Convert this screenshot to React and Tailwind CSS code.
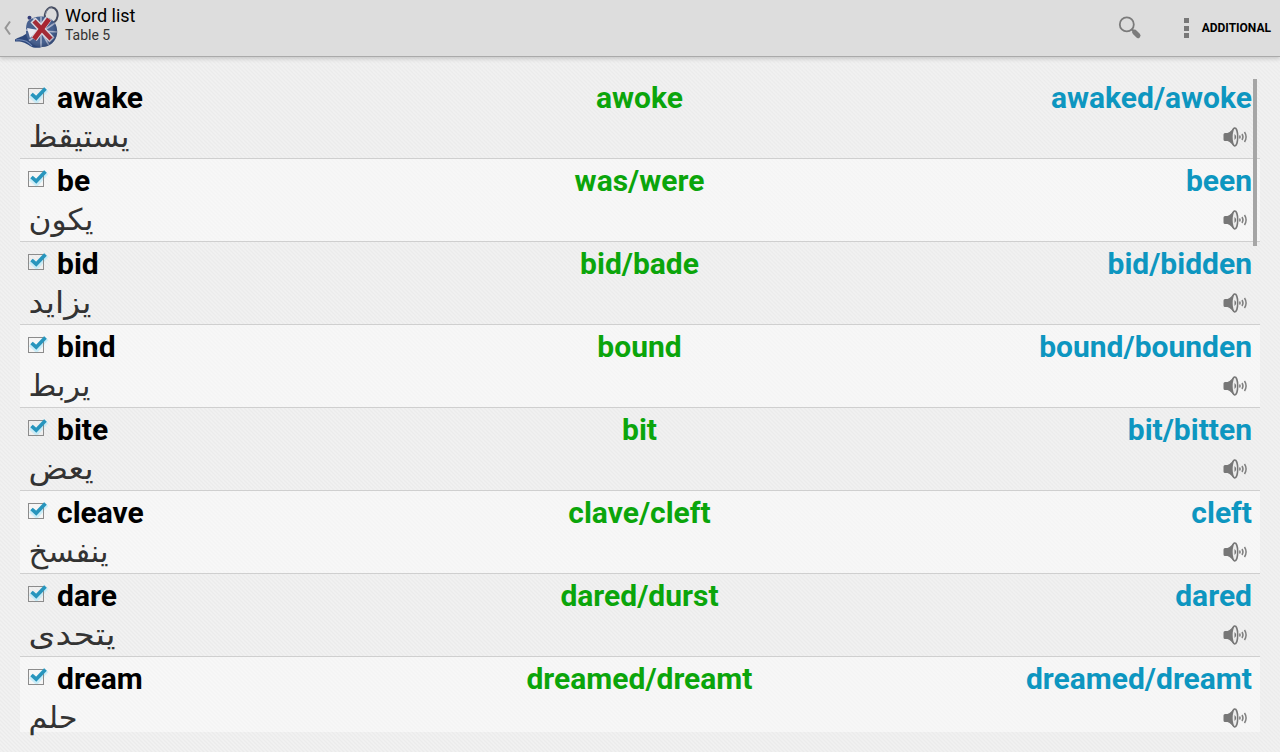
const WORDS = [
  { base: "awake", past: "awoke", participle: "awaked/awoke", arabic: "يستيقظ", width: 101 },
  { base: "be", past: "was/were", participle: "been", arabic: "يكون", width: 65 },
  { base: "bid", past: "bid/bade", participle: "bid/bidden", arabic: "يزايد", width: 63 },
  { base: "bind", past: "bound", participle: "bound/bounden", arabic: "يربط", width: 62 },
  { base: "bite", past: "bit", participle: "bit/bitten", arabic: "يعض", width: 65 },
  { base: "cleave", past: "clave/cleft", participle: "cleft", arabic: "ينفسخ", width: 80 },
  { base: "dare", past: "dared/durst", participle: "dared", arabic: "يتحدى", width: 87 },
  { base: "dream", past: "dreamed/dreamt", participle: "dreamed/dreamt", arabic: "حلم", width: 49 },
]

function TeapotLogo() {
  return (
    <svg width="46" height="44" viewBox="0 0 46 44" className="shrink-0">
      <defs>
        <clipPath id="pot">
          <path d="M14 15C19 11 27 9 34 12C41 14 44 21 43 28C42 35 36 41 28 41C19 41 12 34 12 26C12 21 12 18 14 15Z" />
        </clipPath>
        <radialGradient id="shade" cx="0.45" cy="0.45" r="0.6">
          <stop offset="0.6" stopColor="#1b2950" stopOpacity="0" />
          <stop offset="1" stopColor="#1b2950" stopOpacity="0.75" />
        </radialGradient>
      </defs>
      {/* Handle */}
      <ellipse cx="37.3" cy="9.3" rx="6.4" ry="8" transform="rotate(8 37 9)" fill="none" stroke="#454c60" strokeWidth="2" />
      <path d="M31.5 9C32 4 35 2 38 2" fill="none" stroke="#9299aa" strokeWidth="0.9" />
      {/* Spout */}
      <path d="M1 33.5C4 31 9 31 13 27L28 41C24 42.5 19 42 16 40C12 37 8 35 1 35.5Z" fill="#2c467a" />
      <path d="M2 34C9 33 14 35 18 40" fill="none" stroke="#7189b6" strokeWidth="1.2" />
      <circle cx="15.5" cy="11.8" r="2" fill="#343d78" />
      {/* Body with the flag */}
      <g clipPath="url(#pot)">
        <rect x="8" y="7" width="38" height="37" fill="#48618f" />
        <path d="M27 9V42M10 24L45 26M18 9L37 43M44 15L13 36" stroke="#a9b3cb" strokeWidth="1.6" />
        <path d="M13 22L24 24L16 32Z" fill="#e9e8ef" />
        <path d="M19 14L38 34M35 12L20 33" stroke="#d9d9e2" strokeWidth="7" />
        <path d="M20 15L37 33" stroke="#a32c38" strokeWidth="4.4" />
        <path d="M35 13L20 33" stroke="#a82632" strokeWidth="4.8" />
        <rect x="8" y="7" width="38" height="37" fill="url(#shade)" />
      </g>
    </svg>
  )
}

function SearchIcon() {
  return (
    <svg width="24" height="24" viewBox="0 0 24 24" fill="none" stroke="#7b7b7b">
      <circle cx="8.8" cy="8.4" r="7" strokeWidth="1.8" />
      <path d="M13.5 13L17 16.5" strokeWidth="2.4" />
      <path d="M16.7 16.2L20 19.6" strokeWidth="5" strokeLinecap="round" />
    </svg>
  )
}

function SpeakerIcon() {
  return (
    <svg width="26" height="22" viewBox="0 0 26 22" className="shrink-0">
      <path d="M0.5 8.5Q0.5 7 2 7H4.5C7.5 6 9 3 12 1.5V20.5C9 19 7.5 16 4.5 15H2Q0.5 15 0.5 13.5Z" fill="#777" />
      <ellipse cx="11.8" cy="11" rx="2.9" ry="8.9" fill="#ececec" stroke="#777" strokeWidth="1.5" />
      <path d="M11.5 8Q15 11 11.5 14Z" fill="#777" />
      <path d="M16.5 9.5Q17.8 11 16.5 12.5M19 8Q21 11 19 14M21.5 6Q24.7 11 21.5 16" fill="none" stroke="#808080" strokeWidth="1.5" />
    </svg>
  )
}

function Checkbox() {
  return (
    <svg width="24" height="24" viewBox="0 0 24 24" className="mb-1 shrink-0">
      <path d="M5 11L10.5 16L20 5" fill="none" stroke="#aee8fa" strokeWidth="6" opacity="0.6" />
      <rect x="2.5" y="4.5" width="15" height="15" fill="none" stroke="#8c8c8c" />
      <path d="M5.5 10L10.2 14.2L19.5 4.4" fill="none" stroke="#2795bd" strokeWidth="3.6" />
    </svg>
  )
}

function WordRow({ word, light }) {
  return (
    <li className={`h-[83px] shrink-0 border-b border-[#cfcfcf] pl-[6px] pr-2 last:h-[75px] last:border-b-0 ${light ? "bg-white/45" : ""}`}>
      <div className="grid h-[43px] grid-cols-3 items-center text-[30px] leading-[43px] font-bold">
        <div className="flex items-center text-black">
          <Checkbox />
          <span className="ml-[7px]">{word.base}</span>
        </div>
        <span className="pl-px text-center text-[#0ba50b]">{word.past}</span>
        <span className="text-right text-[#0d96c0]">{word.participle}</span>
      </div>
      <div className="flex h-9 items-center justify-between pr-[3px] pl-[3px]">
        <svg width={word.width} height="36" className="overflow-visible">
          <text
            x="-0.5"
            y="28"
            direction="ltr"
            textLength={word.width}
            lengthAdjust="spacingAndGlyphs"
            className="fill-[#333] font-['DejaVu_Sans',sans-serif] text-[30px]"
          >
            {word.arabic}
          </text>
        </svg>
        <SpeakerIcon />
      </div>
    </li>
  )
}

export default function App() {
  return (
    <div className="flex h-[752px] w-[1280px] flex-col overflow-hidden bg-[#efefef] bg-[repeating-linear-gradient(45deg,#ebebeb_0px,#f2f2f2_1.414px,#ebebeb_2.828px)] font-[Roboto,sans-serif]">
      {/* Action bar */}
      <header className="flex h-14 shrink-0 items-center bg-[#dddddd] shadow-[0_1px_0_#aaaaaa,0_3px_4px_#c8c8c8]">
        <svg width="14" height="20" viewBox="0 0 14 20" fill="none" stroke="#969696" strokeWidth="2">
          <path d="M10 3.5L5.5 10L10 16.5" />
        </svg>
        <TeapotLogo />
        <div className="ml-[5px] flex flex-col pb-[6px]">
          <h1 className="text-[18px] leading-[20px] text-black">Word list</h1>
          <p className="text-[14px] leading-[18px] text-[#333]">Table 5</p>
        </div>
        <div className="ml-auto flex items-center pr-[9px]">
          <SearchIcon />
          <div className="ml-[42px] flex flex-col gap-[2.5px]">
            <i className="size-[5px] bg-[#777]" />
            <i className="size-[5px] bg-[#777]" />
            <i className="size-[5px] bg-[#777]" />
          </div>
          <span className="ml-[13px] text-[12px] font-bold text-black">ADDITIONAL</span>
        </div>
      </header>

      {/* Word list */}
      <main className="relative mx-5 mt-5 h-[656px]">
        <ul className="flex flex-col">
          {WORDS.map((word, index) => (
            <WordRow key={word.base} word={word} light={index % 2 === 1} />
          ))}
        </ul>
        <div className="absolute top-[3px] right-[3px] h-[167px] w-1 bg-[#a6a6a6]" />
      </main>
    </div>
  )
}
